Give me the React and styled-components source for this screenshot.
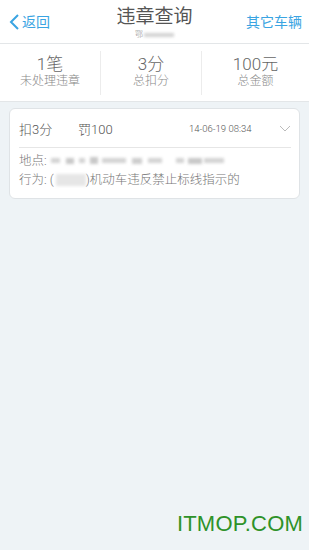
import styled, { createGlobalStyle } from "styled-components"

const GlobalStyle = createGlobalStyle`
  html, body {
    margin: 0;
    padding: 0;
    background: #eef3f6;
    font-family: Roboto, "Noto Sans CJK SC", sans-serif;
  }
`

const Page = styled.div`
  width: 309px;
  height: 550px;
  background: #eef3f6;
  position: relative;
  overflow: hidden;
  font-weight: 300;
`

const Header = styled.header`
  height: 43px;
  background: #fff;
  border-bottom: 1px solid #e3e6e8;
  display: grid;
  grid-template-columns: 70px 1fr 70px;
  align-items: center;
`

const NavButton = styled.div`
  display: flex;
  align-items: center;
  justify-content: ${(p) => (p.right ? "flex-end" : "flex-start")};
  padding: ${(p) => (p.right ? "0 7px 0 0" : "0 0 0 8px")};
  color: #3aa4e2;
  font-size: 14px;
  font-weight: 400;
  line-height: 1;
  margin-top: 1px;

  svg {
    margin-right: 2px;
  }
`

const TitleBlock = styled.div`
  display: flex;
  flex-direction: column;
  align-items: center;
  padding-top: 1px;

  h1 {
    margin: 0;
    font-size: 19px;
    font-weight: 400;
    color: #555;
    line-height: 24px;
  }
`

const Plate = styled.div`
  display: flex;
  align-items: center;
  font-size: 8px;
  color: #888;
  line-height: 10px;
  margin-top: 1px;
`

const Blur = styled.span`
  display: inline-block;
  width: ${(p) => p.w}px;
  height: ${(p) => p.h || 6}px;
  background: ${(p) => p.c || "#d3d3d3"};
  filter: blur(1.6px);
  margin-left: ${(p) => p.ml || 0}px;
  vertical-align: middle;
`

const Stats = styled.div`
  height: 57px;
  background: #fff;
  border-bottom: 1px solid #e3e6e8;
  display: grid;
  grid-template-columns: 100px 101px 1fr;
  align-items: center;
`

const Stat = styled.div`
  display: flex;
  flex-direction: column;
  align-items: center;
  border-left: ${(p) => (p.first ? "none" : "1px solid #ececec")};
  height: 44px;
  justify-content: center;
  padding-bottom: 2px;
  box-sizing: border-box;

  strong {
    font-weight: 300;
    font-size: 17px;
    line-height: 19px;
    color: #666;
  }

  span {
    font-size: 12px;
    line-height: 15px;
    color: #888;
  }
`

const Card = styled.div`
  margin: 6px 9px 0 9px;
  background: #fff;
  border: 1px solid #dfe3e6;
  border-radius: 6px;
  padding: 0 8px 9px 9px;
  color: #666;
`

const CardTop = styled.div`
  height: 37px;
  display: flex;
  align-items: center;
  border-bottom: 1px solid #e6e6e6;
  font-size: 13px;
  padding-top: 1px;
`

const Points = styled.span`
  width: 59px;
  color: #555;
`

const Fine = styled.span`
  width: 111px;
  color: #555;
`

const Time = styled.span`
  font-size: 9.5px;
  color: #555;
  flex: 1;
`

const Line = styled.div`
  display: flex;
  align-items: center;
  font-size: 12.5px;
  line-height: 19px;
  color: #777;
  margin-top: ${(p) => (p.first ? "3px" : "0")};
`

const Watermark = styled.div`
  position: absolute;
  right: 6px;
  bottom: 13px;
  font-family: "Liberation Sans", Arial, sans-serif;
  font-size: 22px;
  font-weight: 400;
  color: #2e9229;
  letter-spacing: 0.2px;
`

const App = () => {
  return (
    <Page>
      <GlobalStyle />
      <Header>
        <NavButton>
          <svg width="12" height="18" viewBox="0 0 12 18">
            <path d="M10 2 L3 9 L10 16" fill="none" stroke="#3aa4e2" strokeWidth="2" />
          </svg>
          返回
        </NavButton>
        <TitleBlock>
          <h1>违章查询</h1>
          <Plate>
            鄂<Blur w={30} h={4} ml={1} />
          </Plate>
        </TitleBlock>
        <NavButton right>其它车辆</NavButton>
      </Header>
      <Stats>
        <Stat first>
          <strong>1笔</strong>
          <span>未处理违章</span>
        </Stat>
        <Stat>
          <strong>3分</strong>
          <span>总扣分</span>
        </Stat>
        <Stat>
          <strong>100元</strong>
          <span>总金额</span>
        </Stat>
      </Stats>
      <Card>
        <CardTop>
          <Points>扣3分</Points>
          <Fine>罚100</Fine>
          <Time>14-06-19 08:34</Time>
          <svg width="12" height="8" viewBox="0 0 12 8">
            <path d="M1 1 L6 6 L11 1" fill="none" stroke="#bbb" strokeWidth="1" />
          </svg>
        </CardTop>
        <Line first>
          地点:
          <Blur w={9} h={5} ml={4} />
          <Blur w={8} h={6} ml={6} c="#c8c8c8" />
          <Blur w={6} h={5} ml={5} />
          <Blur w={8} h={7} ml={5} c="#c8c8c8" />
          <Blur w={24} h={5} ml={4} />
          <Blur w={10} h={6} ml={6} c="#cdcdcd" />
          <Blur w={14} h={5} ml={6} />
          <Blur w={8} h={5} ml={14} />
          <Blur w={14} h={6} ml={4} c="#c8c8c8" />
          <Blur w={20} h={5} ml={2} />
        </Line>
        <Line>
          行为: (
          <Blur w={30} h={12} ml={2} c="#e6e6e6" />
          )机动车违反禁止标线指示的
        </Line>
      </Card>
      <Watermark>ITMOP.COM</Watermark>
    </Page>
  )
}

export default App
